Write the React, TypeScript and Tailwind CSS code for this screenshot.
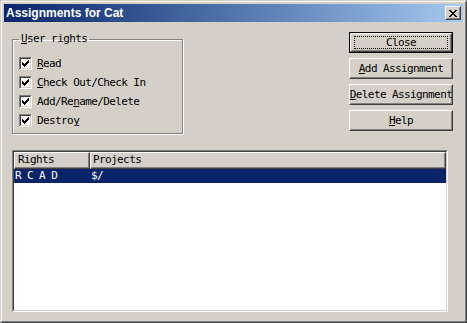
const mono = { fontFamily: '"DejaVu Sans Mono", "Liberation Mono", monospace' };

function Check() {
  // classic 7x7 pixel check mark
  const px = [
    [6, 0], [5, 1], [6, 1], [0, 2], [4, 2], [5, 2], [6, 2],
    [0, 3], [1, 3], [3, 3], [4, 3], [5, 3], [0, 4], [1, 4], [2, 4], [3, 4], [4, 4],
    [1, 5], [2, 5], [3, 5], [2, 6],
  ];
  return (
    <svg width="7" height="7" viewBox="0 0 7 7" shapeRendering="crispEdges">
      {px.map(([x, y]) => (
        <rect key={`${x}-${y}`} x={x} y={y} width="1" height="1" fill="#000" />
      ))}
    </svg>
  );
}

function Checkbox({ label }: { label: React.ReactNode }) {
  return (
    <div className="flex h-[19px] items-center gap-[5px]">
      <div className="h-[13px] w-[13px] border border-t-[#808080] border-l-[#808080] border-r-white border-b-white">
        <div className="flex h-full w-full items-center justify-center border border-t-[#404040] border-l-[#404040] border-r-[#d4d0c8] border-b-[#d4d0c8] bg-white">
          <Check />
        </div>
      </div>
      <span className="whitespace-nowrap text-[11px] leading-none tracking-[-0.6px] text-black">{label}</span>
    </div>
  );
}

function Button({ children, isDefault }: { children: React.ReactNode; isDefault?: boolean }) {
  const inner = (
    <div className="h-full w-full border border-t-white border-l-white border-r-[#404040] border-b-[#404040]">
      <div className="flex h-full w-full items-center justify-center border border-t-[#d4d0c8] border-l-[#d4d0c8] border-r-[#808080] border-b-[#808080]">
        {isDefault ? (
          <div className="flex h-[13px] w-[94px] items-center justify-center border border-dotted border-black">
            {children}
          </div>
        ) : (
          children
        )}
      </div>
    </div>
  );
  return (
    <div className={`h-[21px] w-[104px] whitespace-nowrap text-[11px] leading-none tracking-[-0.6px] text-black ${isDefault ? "border border-black" : ""}`}>
      {inner}
    </div>
  );
}

export default function App() {
  return (
    <div className="h-[323px] w-[467px] border border-t-[#d4d0c8] border-l-[#d4d0c8] border-r-[#404040] border-b-[#404040] bg-[#d4d0c8]" style={mono}>
      <div className="flex h-full flex-col border border-t-white border-l-white border-r-[#808080] border-b-[#808080] p-[2px]">
        {/* title bar */}
        <div className="flex h-[18px] items-center bg-linear-to-r from-[#0a246a] to-[#a6caf0] pl-[2px] pr-[2px]">
          <span className="text-[12px] font-bold text-white" style={{ fontFamily: '"Liberation Sans", Arial, sans-serif' }}>
            Assignments for Cat
          </span>
          <div className="ml-auto h-[14px] w-[16px] border border-t-white border-l-white border-r-[#404040] border-b-[#404040] bg-[#d4d0c8]">
            <div className="flex h-full w-full items-center justify-center border border-t-[#d4d0c8] border-l-[#d4d0c8] border-r-[#808080] border-b-[#808080]">
              <svg width="8" height="7" viewBox="0 0 8 7" shapeRendering="crispEdges">
                <path d="M0 0h2v1h-2zM6 0h2v1h-2zM1 1h2v1h-2zM5 1h2v1h-2zM2 2h4v1h-4zM3 3h2v1h-2zM2 4h4v1h-4zM1 5h2v1h-2zM5 5h2v1h-2zM0 6h2v1h-2zM6 6h2v1h-2z" fill="#000" />
              </svg>
            </div>
          </div>
        </div>

        {/* body */}
        <div className="flex flex-1 flex-col pl-[8px]">
          <div className="flex">
            <fieldset className="mt-[11px] h-[101px] w-[171px] border border-[#808080] pl-[6px] pt-[9px] shadow-[inset_1px_1px_0_#fff,1px_1px_0_#fff]">
              <legend className="px-[2px] text-[11px] leading-[12px] tracking-[-0.6px] text-black">
                <span className="underline">U</span>ser rights
              </legend>
              <Checkbox label={<><span className="underline">R</span>ead</>} />
              <Checkbox label={<><span className="underline">C</span>heck Out/Check In</>} />
              <Checkbox label={<>Add/Re<span className="underline">n</span>ame/Delete</>} />
              <Checkbox label={<>Destro<span className="underline">y</span></>} />
            </fieldset>

            <div className="ml-auto mr-[10px] mt-[10px] flex flex-col gap-[5px]">
              <Button isDefault>Close</Button>
              <Button><span><span className="underline">A</span>dd Assignment</span></Button>
              <Button><span><span className="underline">D</span>elete Assignment</span></Button>
              <Button><span><span className="underline">H</span>elp</span></Button>
            </div>
          </div>

          {/* list view */}
          <div className="mb-[7px] mt-[16px] w-[436px] flex-1 border border-t-[#808080] border-l-[#808080] border-r-white border-b-white">
            <div className="flex h-full flex-col border border-t-[#404040] border-l-[#404040] border-r-[#d4d0c8] border-b-[#d4d0c8] bg-white">
              <div className="flex h-[17px] bg-[#d4d0c8] text-[11px] tracking-[-0.6px] text-black">
                <div className="w-[76px] border border-t-white border-l-white border-r-[#404040] border-b-[#404040]">
                  <div className="flex h-full items-center border-r border-b border-[#808080] pl-[3px]">Rights</div>
                </div>
                <div className="flex-1 border border-t-white border-l-white border-r-[#404040] border-b-[#404040]">
                  <div className="flex h-full items-center border-r border-b border-[#808080] pl-[2px]">Projects</div>
                </div>
              </div>
              <div className="flex h-[14px] items-center bg-[#0a246a] text-[11px] tracking-[-0.6px] text-white">
                <span className="w-[76px] pl-[1px]">R C A D</span>
                <span className="pl-[1px]">$/</span>
              </div>
            </div>
          </div>
        </div>
      </div>
    </div>
  );
}
